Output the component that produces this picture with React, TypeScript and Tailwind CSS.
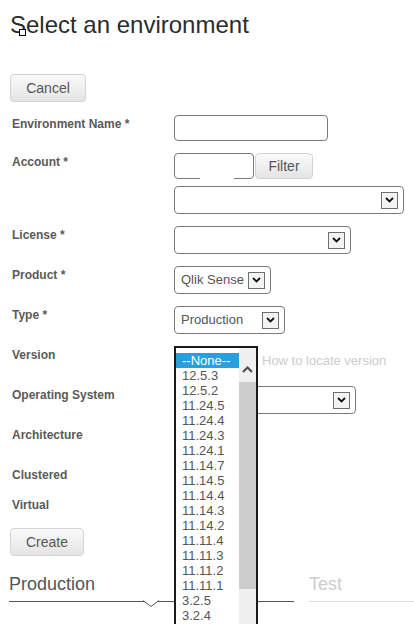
import React from 'react';

const versions = [
  '12.5.3', '12.5.2', '11.24.5', '11.24.4', '11.24.3', '11.24.1', '11.14.7', '11.14.5',
  '11.14.4', '11.14.3', '11.14.2', '11.11.4', '11.11.3', '11.11.2', '11.11.1', '3.2.5', '3.2.4',
];

function Arrow() {
  return (
    <span className="flex h-[17px] w-[17px] items-center justify-center border border-[#6f6f6f] bg-[#f4f4f4]">
      <svg width="9" height="6" viewBox="0 0 9 6">
        <path d="M1 1 L4.5 4.5 L8 1" fill="none" stroke="#111" strokeWidth="1.8" />
      </svg>
    </span>
  );
}

function SelectBox({ width, value }: { width: string; value?: string }) {
  return (
    <div className={`${width} flex h-7 items-center justify-between rounded-[4px] border border-[#7a7a7a] bg-white pl-[6px] pr-[5px]`}>
      <span className="text-[13px] text-[#555]">{value}</span>
      <Arrow />
    </div>
  );
}

function GrayButton({ label, className }: { label: string; className: string }) {
  return (
    <button className={`${className} rounded-[4px] border border-[#d4d4d4] bg-gradient-to-b from-[#fafafa] to-[#e4e4e4] text-[14px] text-[#555]`}>
      {label}
    </button>
  );
}

function Row({ label, height, children }: { label: string; height: string; children?: React.ReactNode }) {
  return (
    <div className={`${height} flex`}>
      <div className="w-[174px] shrink-0 pl-[12px] pt-[1px] text-[12px] font-bold leading-[16px] text-[#5a5a5a]">{label}</div>
      <div className="flex-1">{children}</div>
    </div>
  );
}

function VersionList() {
  return (
    <div className="absolute left-0 top-0 z-10 flex h-[282px] w-[84px] overflow-hidden border-2 border-[#1a1a1a] bg-white">
      <div className="flex-1 pt-[5px] text-[13px] leading-[15px] text-[#555]">
        <div className="bg-[#27a0dd] pl-[6px] text-white">--None--</div>
        {versions.map((v) => (
          <div key={v} className="pl-[6px]">{v}</div>
        ))}
      </div>
      <div className="flex w-[17px] flex-col bg-[#f0f0f0]">
        <div className="flex h-[34px] items-end justify-center pb-[9px]">
          <svg width="11" height="7" viewBox="0 0 11 7">
            <path d="M1 6 L5.5 1.5 L10 6" fill="none" stroke="#505050" strokeWidth="2.2" />
          </svg>
        </div>
        <div className="h-[207px] bg-[#cdcdcd]" />
      </div>
    </div>
  );
}

export default function App() {
  return (
    <div className="h-[624px] w-[414px] overflow-hidden bg-white font-['Liberation_Sans',Arial,sans-serif]">
      <div className="relative ml-[10px] mt-[11px] text-[24px] leading-[28px] text-[#2b2b2b]">
        Select an environment
        <span className="absolute left-[9px] top-[18px] h-[7px] w-[7px] border border-black bg-white" />
      </div>

      <GrayButton label="Cancel" className="ml-[10px] mt-[35px] h-[28px] w-[76px]" />

      <div className="mt-[13px] flex flex-col gap-3">
        <Row label="Environment Name *" height="h-[26px]">
          <div className="h-[26px] w-[154px] rounded-[4px] border border-[#7a7a7a]" />
        </Row>

        <Row label="Account *" height="h-[61px]">
          <div className="flex">
            <div className="relative h-[26px] w-[80px] rounded-[4px] border border-[#7a7a7a]">
              <span className="absolute -bottom-px left-[25px] h-px w-[34px] bg-white" />
            </div>
            <GrayButton label="Filter" className="ml-[1px] h-[26px] w-[58px]" />
          </div>
          <div className="mt-[7px]">
            <SelectBox width="w-[230px]" />
          </div>
        </Row>

        <Row label="License *" height="h-[28px]">
          <SelectBox width="w-[177px]" />
        </Row>

        <Row label="Product *" height="h-[28px]">
          <SelectBox width="w-[97px]" value="Qlik Sense" />
        </Row>

        <Row label="Type *" height="h-[28px]">
          <SelectBox width="w-[111px]" value="Production" />
        </Row>

        <Row label="Version" height="h-[28px]">
          <div className="flex">
            <div className="relative h-[28px] w-[84px]">
              <VersionList />
            </div>
            <span className="ml-[4px] pt-[7px] text-[13px] leading-[15px] text-[#cccccc]">How to locate version</span>
          </div>
        </Row>

        <Row label="Operating System" height="h-[28px]">
          <SelectBox width="w-[182px]" />
        </Row>

        <Row label="Architecture" height="h-[28px]" />
        <Row label="Clustered" height="h-[18px]" />
        <Row label="Virtual" height="h-[20px]" />

        <GrayButton label="Create" className="ml-[10px] h-[28px] w-[74px]" />
      </div>

      <div className="mt-[18px] flex gap-[15px] pl-[9px]">
        <div className="relative w-[285px] border-b border-[#555] pb-[5px] text-[18px] leading-[21px] text-[#555]">
          Production
          <svg className="absolute -bottom-[7px] left-[134px]" width="16" height="8" viewBox="0 0 16 8">
            <path d="M0 0 L8 6.5 L16 0 Z" fill="white" />
            <path d="M0 0.5 L8 6.5 L16 0.5" fill="none" stroke="#555" strokeWidth="1" />
          </svg>
        </div>
        <div className="flex-1 border-b border-[#dddddd] pb-[6px] text-[18px] leading-[21px] text-[#cccccc]">Test</div>
      </div>
    </div>
  );
}
